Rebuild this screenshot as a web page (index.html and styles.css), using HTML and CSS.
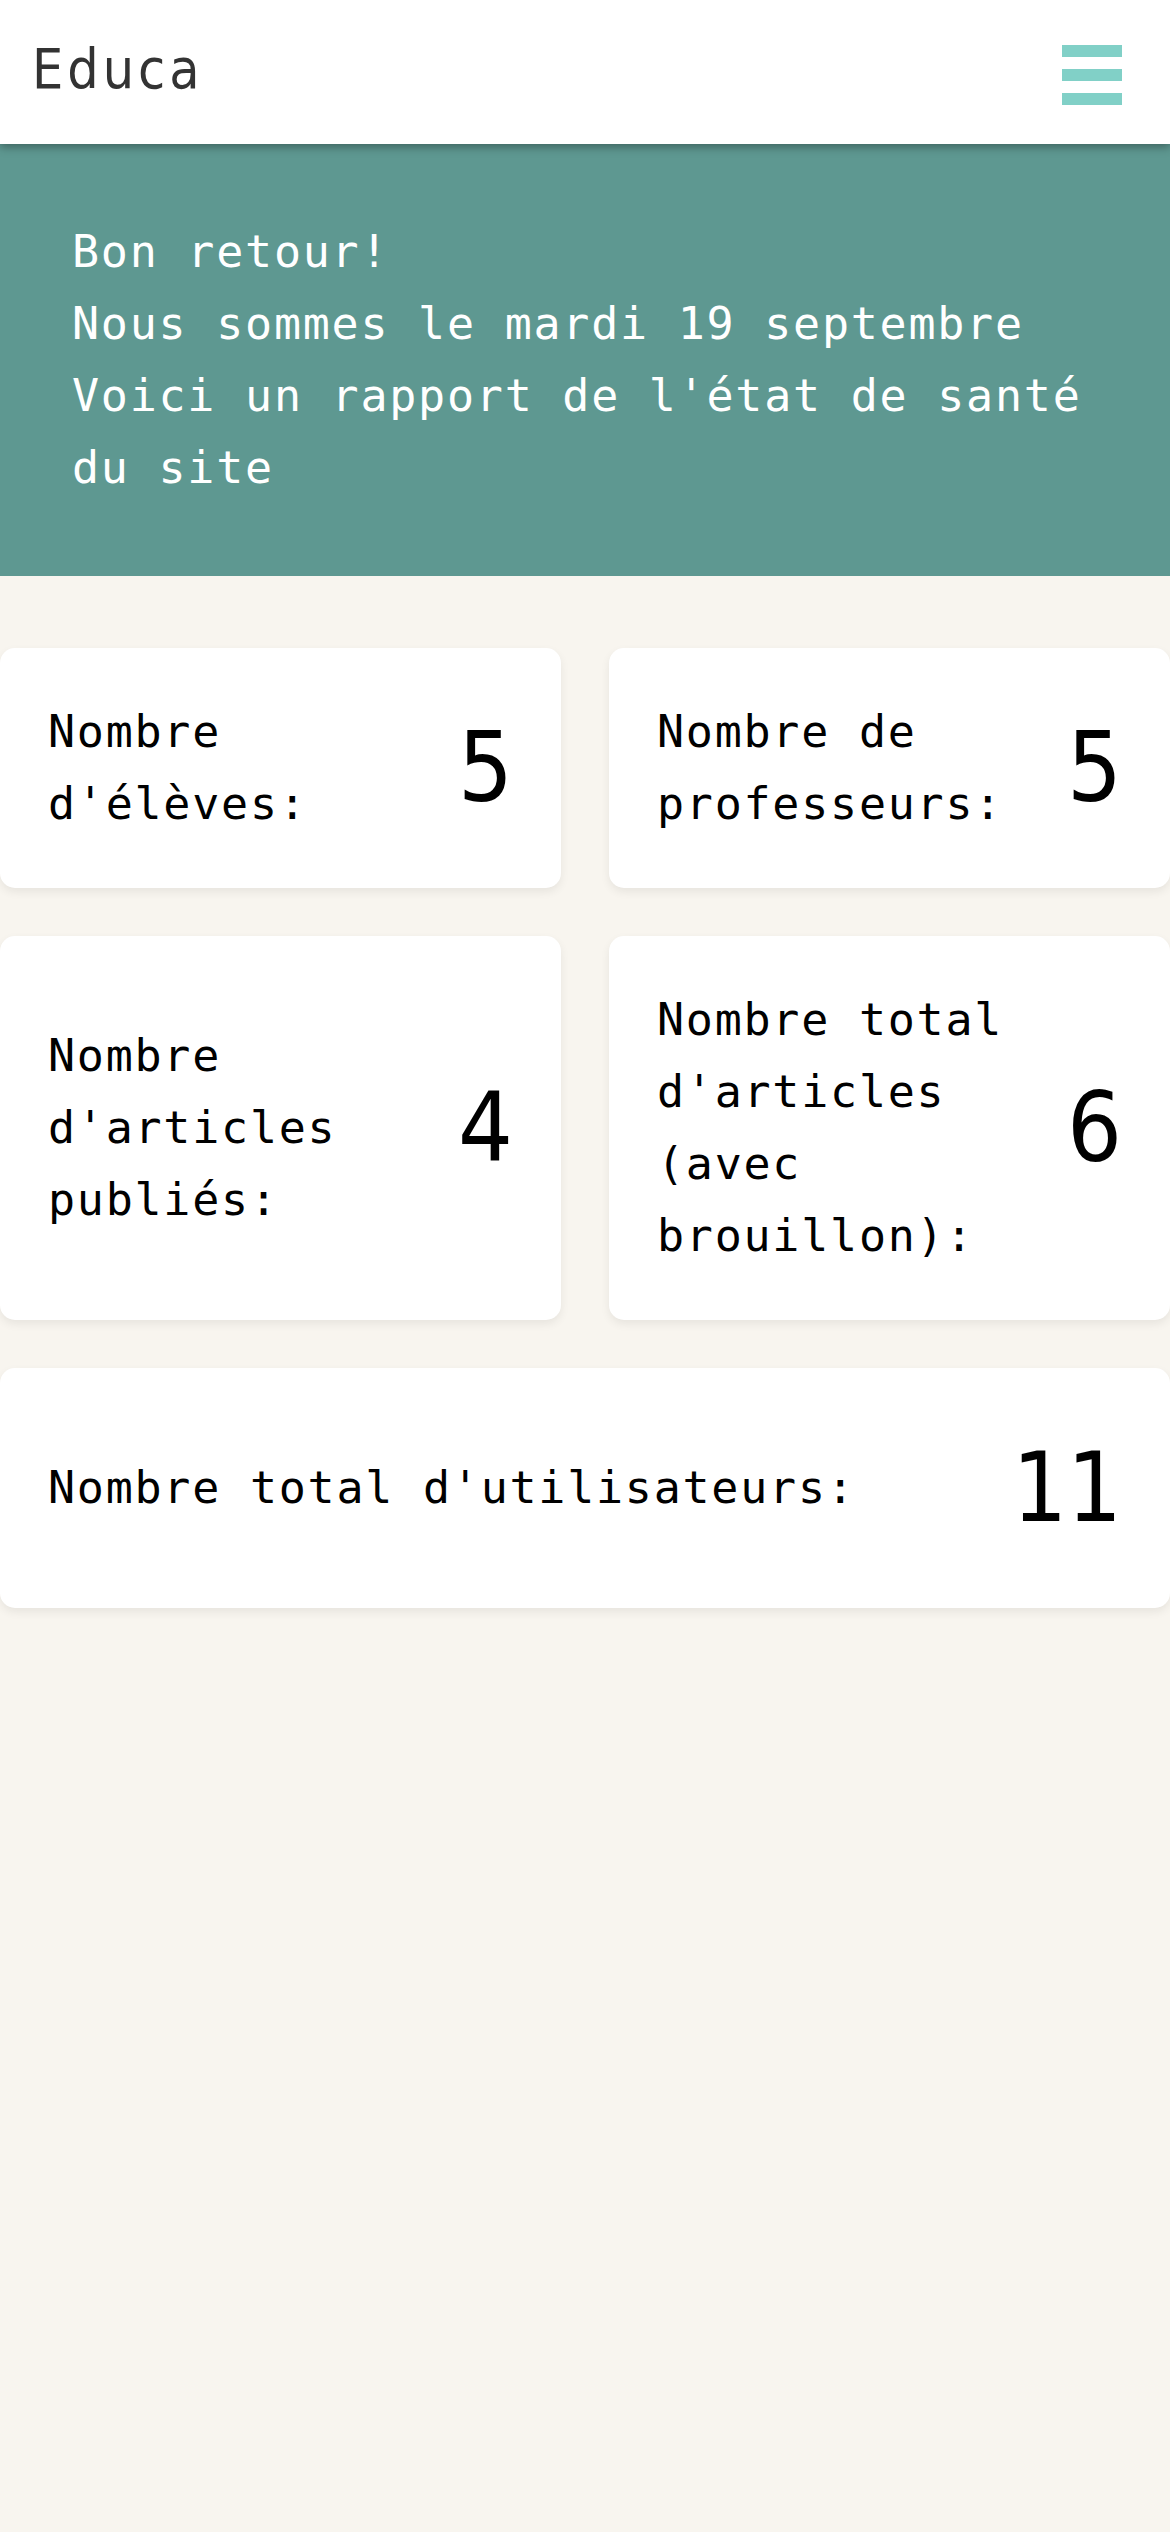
FILE: index.html
```html
<!DOCTYPE html>
<html lang="fr">
<head>
<meta charset="utf-8">
<title>Educa</title>
<link rel="stylesheet" href="styles.css">
</head>
<body>
<header class="topbar">
  <div class="brand">Educa</div>
  <div class="burger" aria-label="menu">
    <span class="bar"></span>
    <span class="bar"></span>
    <span class="bar"></span>
  </div>
</header>
<section class="welcome">
  <p>Bon retour!</p>
  <p>Nous sommes le mardi 19 septembre</p>
  <p>Voici un rapport de l'état de santé du site</p>
</section>
<main class="stats">
  <div class="card">
    <div class="label">Nombre d'élèves:</div>
    <div class="value">5</div>
  </div>
  <div class="card">
    <div class="label">Nombre de professeurs:</div>
    <div class="value">5</div>
  </div>
  <div class="card">
    <div class="label">Nombre d'articles publiés:</div>
    <div class="value">4</div>
  </div>
  <div class="card">
    <div class="label">Nombre total d'articles (avec brouillon):</div>
    <div class="value">6</div>
  </div>
  <div class="card wide">
    <div class="label">Nombre total d'utilisateurs:</div>
    <div class="value">11</div>
  </div>
</main>
</body>
</html>
```
FILE: styles.css
```css
html, body {
  margin: 0;
  padding: 0;
}
body {
  background: #f8f5ef;
  min-height: 2532px;
  font-family: "DejaVu Sans Mono", monospace;
}
.topbar {
  position: relative;
  z-index: 2;
  height: 144px;
  background: #ffffff;
  display: flex;
  align-items: center;
  justify-content: space-between;
  padding: 0 48px 0 32px;
  box-sizing: border-box;
  box-shadow: 0 3px 9px rgba(0, 0, 0, 0.35);
}
.brand {
  font-family: "DejaVu Sans", sans-serif;
  font-stretch: condensed;
  font-size: 55px;
  letter-spacing: 4px;
  color: #333333;
  line-height: 1;
  padding-bottom: 6px;
}
.burger {
  display: flex;
  flex-direction: column;
  gap: 12px;
  width: 60px;
  padding-top: 6px;
}
.bar {
  display: block;
  height: 12px;
  background: #81d0c7;
}
.welcome {
  background: #5e9891;
  padding: 72px 72px;
  color: #ffffff;
  font-size: 45px;
  line-height: 72px;
  letter-spacing: 1.75px;
}
.welcome p {
  margin: 0;
}
.stats {
  display: grid;
  grid-template-columns: 1fr 1fr;
  gap: 48px;
  margin-top: 72px;
}
.card {
  background: #ffffff;
  border-radius: 15px;
  box-shadow: 0 4px 10px rgba(0, 0, 0, 0.07);
  padding: 48px;
  display: flex;
  align-items: center;
  justify-content: space-between;
  gap: 24px;
}
.card.wide {
  grid-column: 1 / -1;
}
.label {
  font-size: 45px;
  line-height: 72px;
  letter-spacing: 1.75px;
  color: #000000;
}
.value {
  font-family: "DejaVu Sans", sans-serif;
  font-stretch: condensed;
  font-size: 96px;
  line-height: 144px;
  color: #000000;
  flex-shrink: 0;
}
```
